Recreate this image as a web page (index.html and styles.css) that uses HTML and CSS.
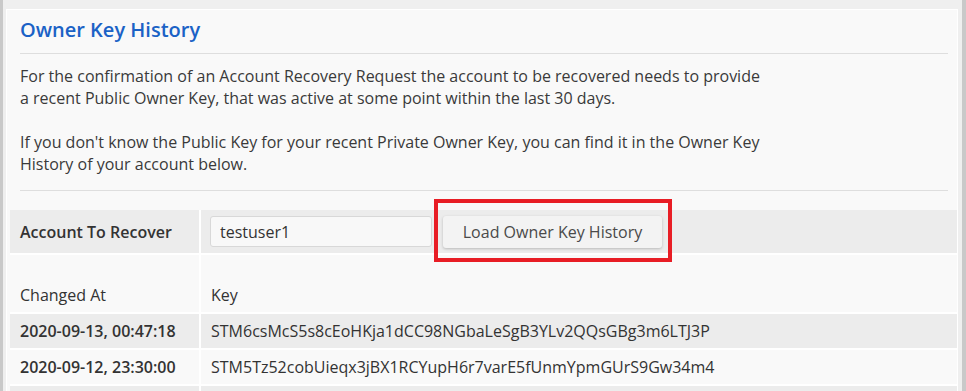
FILE: index.html
```html
<!DOCTYPE html>
<html lang="en">
<head>
<meta charset="utf-8">
<title>Owner Key History</title>
<link rel="stylesheet" href="styles.css">
</head>
<body>
<div class="frame">
  <section class="card">
    <div class="intro">
      <h2 class="title">Owner Key History</h2>
      <hr class="rule">
      <p class="text">For the confirmation of an Account Recovery Request the account to be recovered needs to provide<br>a recent Public Owner Key, that was active at some point within the last 30 days.</p>
      <p class="text">If you don't know the Public Key for your recent Private Owner Key, you can find it in the Owner Key<br>History of your account below.</p>
      <hr class="rule rule-bottom">
    </div>
    <table class="grid">
      <colgroup>
        <col class="c-label">
        <col class="c-value">
      </colgroup>
      <tbody>
        <tr class="row-form">
          <td class="col-label">Account To Recover</td>
          <td class="col-value">
            <div class="form-line">
              <input class="field" type="text" value="testuser1">
              <span class="btn-wrap">
                <button class="btn" type="button">Load Owner Key History</button>
                <span class="highlight"></span>
              </span>
            </div>
          </td>
        </tr>
        <tr class="row-head">
          <td class="col-label head-cell">Changed At</td>
          <td class="col-value head-cell">Key</td>
        </tr>
        <tr class="row-odd">
          <td class="col-label date">2020-09-13, 00:47:18</td>
          <td class="col-value">STM6csMcS5s8cEoHKja1dCC98NGbaLeSgB3YLv2QQsGBg3m6LTJ3P</td>
        </tr>
        <tr class="row-even">
          <td class="col-label date">2020-09-12, 23:30:00</td>
          <td class="col-value">STM5Tz52cobUieqx3jBX1RCYupH6r7varE5fUnmYpmGUrS9Gw34m4</td>
        </tr>
        <tr class="row-odd row-last">
          <td class="col-label date"></td>
          <td class="col-value"></td>
        </tr>
      </tbody>
    </table>
  </section>
</div>
</body>
</html>
```

FILE: styles.css
```css
html, body {
  margin: 0;
  padding: 0;
}

body {
  background: #efefef;
  font-family: "Open Sans", "Noto Sans", sans-serif;
  color: #333;
  overflow: hidden;
}

.frame {
  border-left: 3px solid #c9c9c9;
  border-right: 4px solid #c9c9c9;
  padding: 9px 4px 0 3px;
  background: #efefef;
  min-height: 391px;
  box-sizing: border-box;
}

.card {
  background: #f9f9f9;
  border-top: 1px solid #ffffff;
  border-left: 1px solid #ffffff;
  border-right: 1px solid #ffffff;
  padding: 6px 0 0 3px;
}

.intro {
  padding: 0 9px 0 10px;
}

.title {
  margin: 0;
  font-size: 20px;
  line-height: 28px;
  font-weight: 600;
  color: #1b62c6;
}

.rule {
  border: 0;
  border-top: 1px solid #dedede;
  margin: 9px 0 11px;
}

.rule-bottom {
  margin: 15px 0 19px;
}

.text {
  margin: 0 0 22px;
  font-size: 16px;
  line-height: 22px;
  color: #3a3a3a;
}

.text + .rule-bottom {
  margin-top: 15px;
}

.intro .text:last-of-type {
  margin-bottom: 0;
}

.grid {
  width: 100%;
  table-layout: fixed;
  border-collapse: separate;
  border-spacing: 0;
  font-size: 16px;
  color: #333;
}

.c-label {
  width: 189px;
}

.grid td {
  padding: 0 10px;
  text-align: left;
  vertical-align: middle;
  white-space: nowrap;
}

.grid tr + tr td {
  border-top: 2px solid #ffffff;
}

.grid td + td {
  border-left: 2px solid #ffffff;
}

.row-form td {
  background: #ececec;
  height: 43px;
  box-sizing: border-box;
}

.row-form .col-label {
  font-weight: 600;
}

.row-form .col-value {
  padding-left: 9px;
}

.row-head td {
  background: #f9f9f9;
  height: 59px;
  box-sizing: border-box;
  vertical-align: bottom;
  padding-bottom: 6px;
  line-height: 22px;
}

.row-odd td {
  background: #ececec;
  height: 36px;
  box-sizing: border-box;
}

.row-even td {
  background: #f9f9f9;
  height: 36px;
  box-sizing: border-box;
}

.date {
  font-weight: 600;
}

.form-line {
  display: flex;
  align-items: center;
  gap: 11px;
}

.field {
  width: 222px;
  height: 31px;
  box-sizing: border-box;
  border: 1px solid #d8d8d8;
  border-radius: 3px;
  background: #f8f8f8;
  padding: 0 9px;
  font-family: inherit;
  font-size: 16px;
  color: #333;
  outline: none;
}

.btn-wrap {
  position: relative;
  display: inline-flex;
}

.btn {
  width: 219px;
  height: 32px;
  border: 0;
  border-radius: 3px;
  background: #f3f3f3;
  box-shadow: 0 1px 3px rgba(0, 0, 0, 0.22);
  font-family: inherit;
  font-size: 16px;
  color: #4a4a4a;
  padding: 0;
  cursor: pointer;
}

.highlight {
  position: absolute;
  left: -9px;
  top: -17px;
  right: -10px;
  bottom: -14px;
  border: 4px solid #e81d25;
  pointer-events: none;
}
```
